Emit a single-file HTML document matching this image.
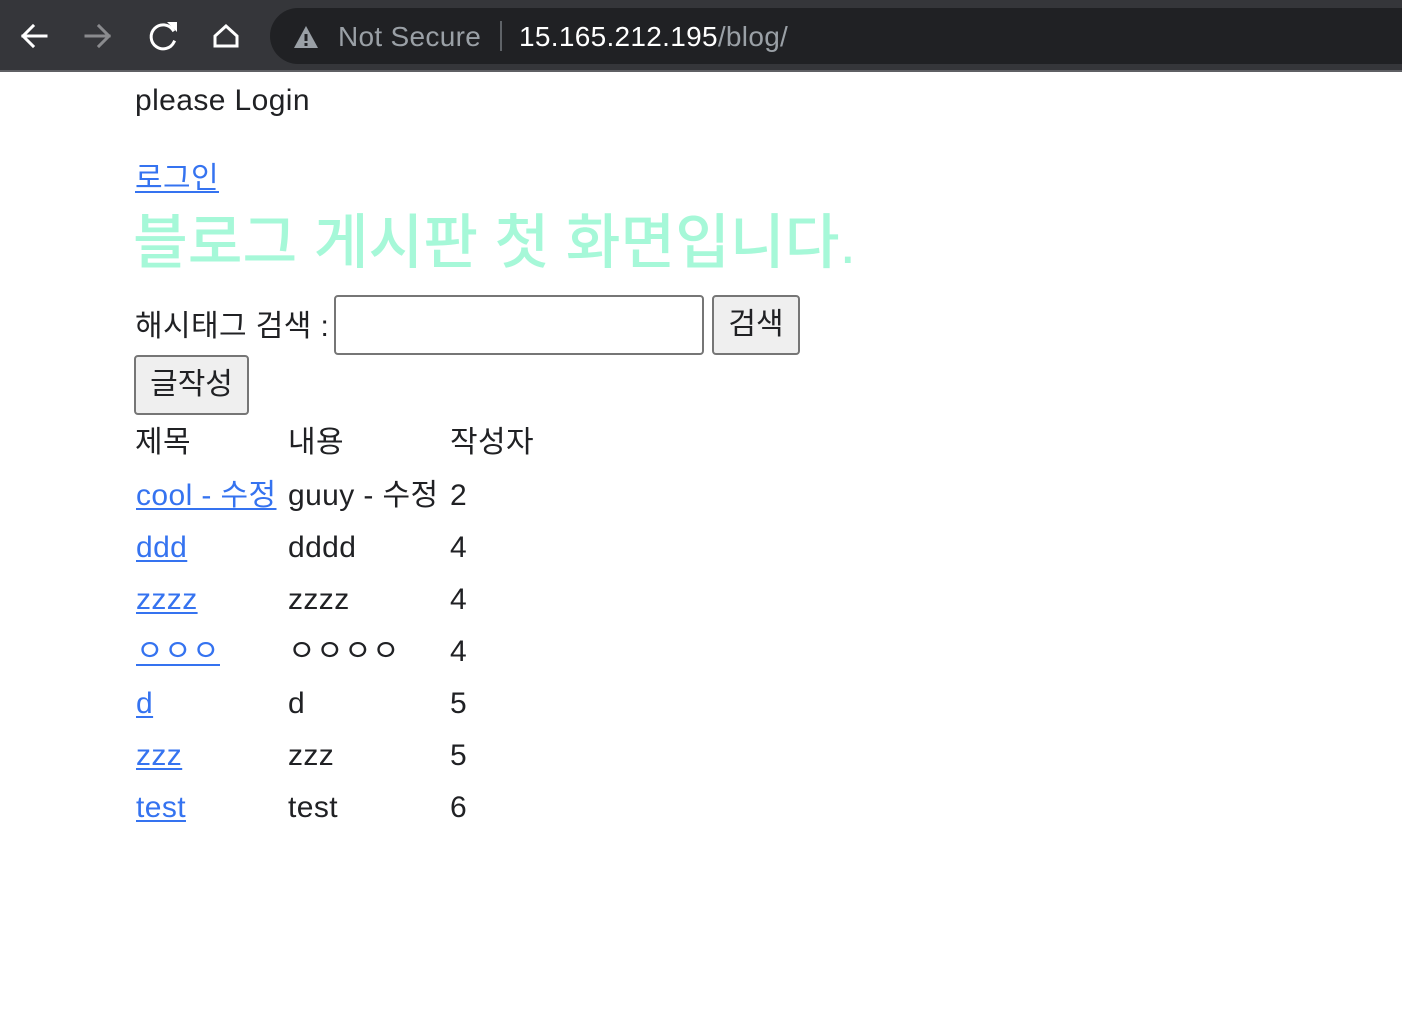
<!DOCTYPE html>
<html><head><meta charset="utf-8"><style>
*{margin:0;padding:0;box-sizing:border-box}
body{width:1402px;height:1022px;background:#fff;position:relative;overflow:hidden;font-family:"Liberation Sans","Noto Sans CJK KR",sans-serif;color:#202124}
.bar{position:absolute;left:0;top:0;width:1402px;height:72px;background:#35363a;border-bottom:2px solid #5f6064}
.addr{position:absolute;left:270px;top:8px;width:1200px;height:56px;border-radius:28px;background:#202124}
.t{position:absolute;white-space:nowrap;font-size:30px;letter-spacing:0.4px;line-height:34px;margin-top:2px}
.bar .t{font-size:28px;letter-spacing:0.3px;margin-top:0}
a{color:#3573f0;text-decoration:underline;text-decoration-thickness:2px;text-underline-offset:3px}
.btn{position:absolute;background:#efefef;border:2px solid #767676;border-radius:4px;font-size:30px;text-align:center;line-height:56px}
</style></head><body>
<div class="bar">
<svg style="position:absolute;left:0;top:0" width="270" height="72">
<g fill="none" stroke-width="3" stroke-linecap="square">
<path d="M46 36H23M33 26L23 36L33 46" stroke="#fff"/>
<path d="M86 36H109M99 26L109 36L99 46" stroke="#8a8b8e"/>
<path d="M173 30A12 12 0 1 0 174 42" stroke="#fff"/>
<path d="M226 26L215 36V46H237V36Z" stroke="#fff" stroke-linejoin="miter"/>
</g>
<path d="M167 22L177 22L177 32Z" fill="#fff"/>
</svg>
<div class="addr"></div>
<svg style="position:absolute;left:292px;top:24px" width="28" height="26"><path d="M14 2L26 24H2Z" fill="#9aa0a6"/><rect x="12.5" y="10" width="3" height="7" fill="#202124"/><rect x="12.5" y="19" width="3" height="3" fill="#202124"/></svg>
<div class="t" style="left:338px;top:20px;color:#9aa0a6">Not Secure</div>
<div style="position:absolute;left:500px;top:21px;width:2px;height:30px;background:#5f6368"></div>
<div class="t" style="left:519px;top:20px;color:#fff">15.165.212.195<span style="color:#9aa0a6">/blog/</span></div>
</div>
<div class="t" style="left:135px;top:82px">please Login</div>
<div class="t" style="left:135px;top:160px"><a>로그인</a></div>
<div class="t" style="left:133px;top:206px;font-size:59.5px;letter-spacing:0;font-weight:500;line-height:70px;color:#a6f8d8">블로그 게시판 첫 화면입니다.</div>
<div class="t" style="left:135px;top:308px">해시태그 검색 :</div>
<div style="position:absolute;left:334px;top:295px;width:370px;height:60px;border:2px solid #767676;border-radius:4px"></div>
<div class="btn" style="left:712px;top:295px;width:88px;height:60px">검색</div>
<div class="btn" style="left:134px;top:355px;width:115px;height:60px">글작성</div>
<div class="t" style="left:135px;top:424px">제목</div><div class="t" style="left:288px;top:424px">내용</div><div class="t" style="left:450px;top:424px">작성자</div>
<div class="t" style="left:136px;top:477px"><a>cool - 수정</a></div><div class="t" style="left:288px;top:477px">guuy - 수정</div><div class="t" style="left:450px;top:477px">2</div>
<div class="t" style="left:136px;top:529px"><a>ddd</a></div><div class="t" style="left:288px;top:529px">dddd</div><div class="t" style="left:450px;top:529px">4</div>
<div class="t" style="left:136px;top:581px"><a>zzzz</a></div><div class="t" style="left:288px;top:581px">zzzz</div><div class="t" style="left:450px;top:581px">4</div>
<div class="t" style="left:136px;top:633px"><a>ㅇㅇㅇ</a></div><div class="t" style="left:288px;top:633px">ㅇㅇㅇㅇ</div><div class="t" style="left:450px;top:633px">4</div>
<div class="t" style="left:136px;top:685px"><a>d</a></div><div class="t" style="left:288px;top:685px">d</div><div class="t" style="left:450px;top:685px">5</div>
<div class="t" style="left:136px;top:737px"><a>zzz</a></div><div class="t" style="left:288px;top:737px">zzz</div><div class="t" style="left:450px;top:737px">5</div>
<div class="t" style="left:136px;top:789px"><a>test</a></div><div class="t" style="left:288px;top:789px">test</div><div class="t" style="left:450px;top:789px">6</div>
</body></html>
